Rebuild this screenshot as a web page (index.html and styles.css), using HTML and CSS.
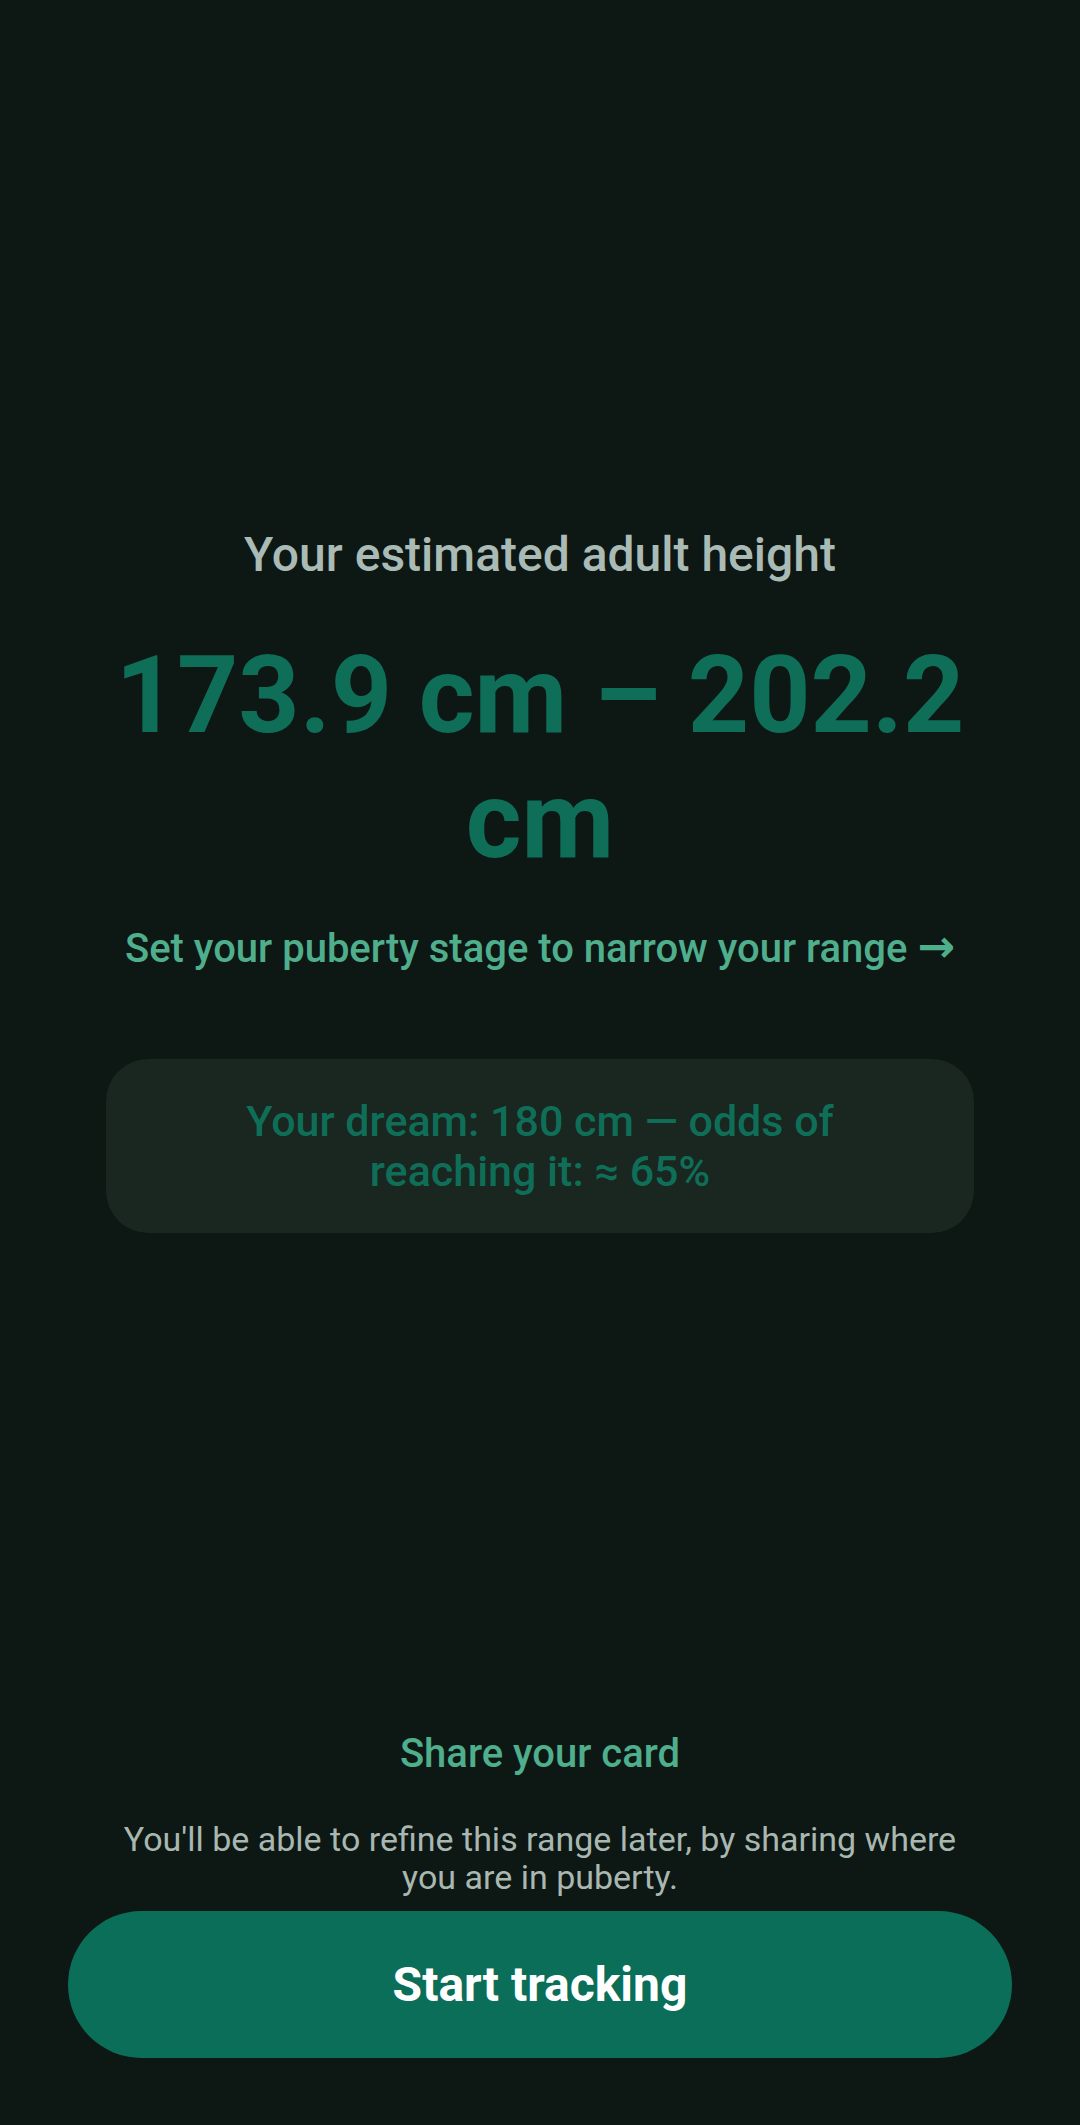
FILE: index.html
```html
<!DOCTYPE html>
<html lang="en">
<head>
    <meta charset="UTF-8">
    <meta name="viewport" content="width=device-width, initial-scale=1.0">
    <title>Your estimated adult height</title>
    <link rel="stylesheet" href="styles.css">
</head>
<body>

    <div class="result">
        <h2 class="result-label">Your estimated adult height</h2>
        <div class="result-range">173.9 cm – 202.2 cm</div>
        <a class="puberty-link" href="#">Set your puberty stage to narrow your range <span class="arrow">→</span></a>

        <div class="dream-card">Your dream: 180 cm — odds of reaching it: ≈ 65%</div>
    </div>

    <div class="footer">
        <a class="share-link" href="#">Share your card</a>
        <p class="footer-note">You'll be able to refine this range later, by sharing where you are in puberty.</p>
        <button class="start-btn">Start tracking</button>
    </div>

</body>
</html>
```

FILE: styles.css
```css
html, body {
    margin: 0;
    padding: 0;
}
body {
    font-family: Roboto, "Noto Sans", Arial, sans-serif;
    background-color: #0d1714;
    width: 1080px;
    height: 2125px;
    display: flex;
    flex-direction: column;
    text-align: center;
}
.result {
    padding: 527px 106px 0;
    display: flex;
    flex-direction: column;
    align-items: center;
}
.result-label {
    margin: 0;
    font-size: 48px;
    line-height: 56px;
    font-weight: 500;
    color: #a9bbb4;
}
.result-range {
    margin-top: 50px;
    font-size: 107px;
    line-height: 125px;
    font-weight: 700;
    color: #0f6e58;
}
.puberty-link {
    margin-top: 42px;
    font-size: 40px;
    line-height: 48px;
    font-weight: 500;
    color: #4fae8c;
    text-decoration: none;
}
.arrow {
    font-family: "DejaVu Sans", sans-serif;
    font-weight: 700;
    font-size: 45px;
    line-height: 0;
}
.dream-card {
    margin-top: 86px;
    width: 100%;
    box-sizing: border-box;
    padding: 37px 90px;
    background-color: #1a2620;
    border-radius: 42px;
    font-size: 43px;
    line-height: 50px;
    font-weight: 500;
    color: #0f6e58;
}
.footer {
    margin-top: auto;
    padding: 0 68px 67px;
    display: flex;
    flex-direction: column;
    align-items: center;
}
.share-link {
    font-size: 40px;
    line-height: 48px;
    font-weight: 500;
    color: #4fae8c;
    text-decoration: none;
}
.footer-note {
    margin: 42px 0 15px;
    padding: 0 30px;
    font-size: 34px;
    line-height: 38px;
    color: #a9b7b1;
}
.start-btn {
    width: 100%;
    height: 147px;
    border: none;
    border-radius: 74px;
    background-color: #0b6e58;
    color: #ffffff;
    font-family: Roboto, "Noto Sans", Arial, sans-serif;
    font-size: 48px;
    font-weight: 700;
    cursor: pointer;
}
```
